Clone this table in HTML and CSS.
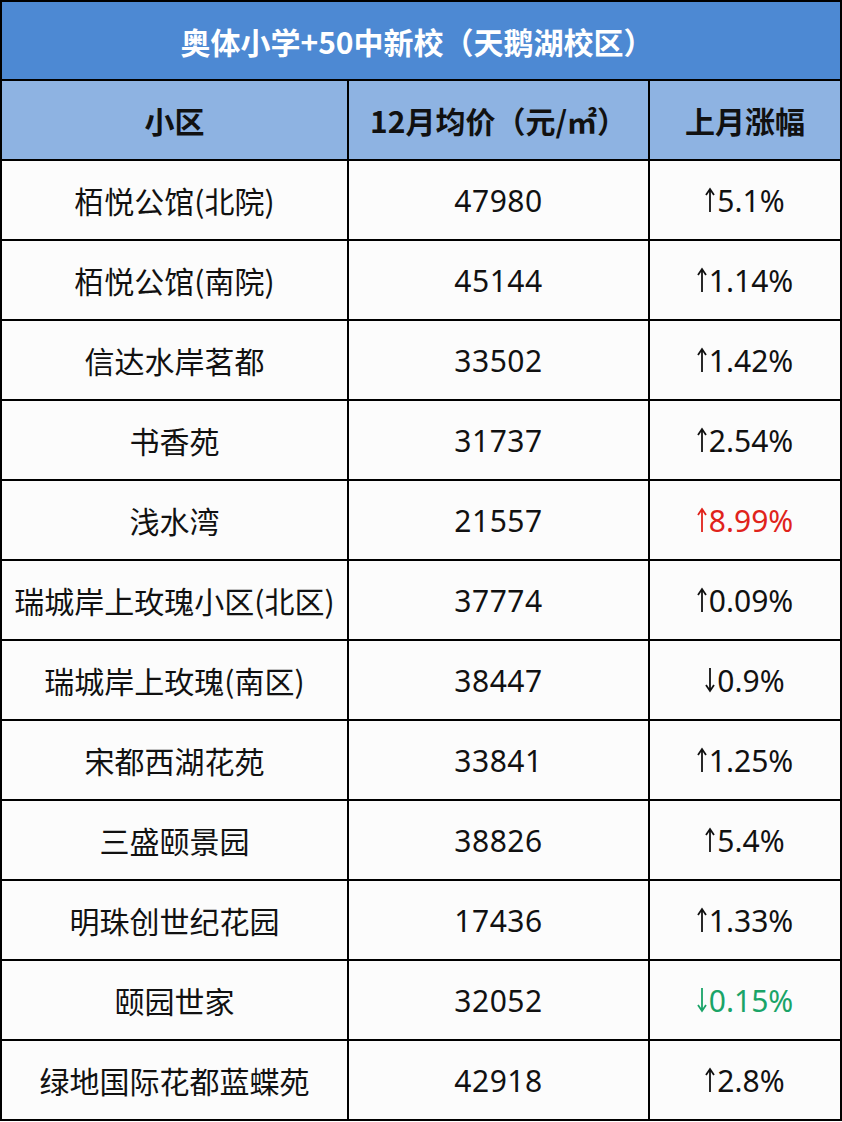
FILE: index.html
```html
<!DOCTYPE html>
<html lang="zh-CN">
<head>
<meta charset="utf-8">
<link rel="stylesheet" href="styles.css">
</head>
<body>
<div class="table">
  <div class="title">奥体小学+50中新校（天鹅湖校区）</div>
  <div class="head">小区</div>
  <div class="head">12月均价（元/㎡）</div>
  <div class="head">上月涨幅</div>

  <div class="cell">栢悦公馆(北院)</div><div class="cell num">47980</div><div class="cell pct"><svg class="arr" viewBox="0 0 10 26"><path d="M5 2V25M1 8L5 2L9 8" /></svg>5.1%</div>
  <div class="cell">栢悦公馆(南院)</div><div class="cell num">45144</div><div class="cell pct"><svg class="arr" viewBox="0 0 10 26"><path d="M5 2V25M1 8L5 2L9 8" /></svg>1.14%</div>
  <div class="cell">信达水岸茗都</div><div class="cell num">33502</div><div class="cell pct"><svg class="arr" viewBox="0 0 10 26"><path d="M5 2V25M1 8L5 2L9 8" /></svg>1.42%</div>
  <div class="cell">书香苑</div><div class="cell num">31737</div><div class="cell pct"><svg class="arr" viewBox="0 0 10 26"><path d="M5 2V25M1 8L5 2L9 8" /></svg>2.54%</div>
  <div class="cell">浅水湾</div><div class="cell num">21557</div><div class="cell pct red"><svg class="arr" viewBox="0 0 10 26"><path d="M5 2V25M1 8L5 2L9 8" /></svg>8.99%</div>
  <div class="cell">瑞城岸上玫瑰小区(北区)</div><div class="cell num">37774</div><div class="cell pct"><svg class="arr" viewBox="0 0 10 26"><path d="M5 2V25M1 8L5 2L9 8" /></svg>0.09%</div>
  <div class="cell">瑞城岸上玫瑰(南区)</div><div class="cell num">38447</div><div class="cell pct"><svg class="arr" viewBox="0 0 10 26"><path d="M5 1V24M1 18L5 24L9 18" /></svg>0.9%</div>
  <div class="cell">宋都西湖花苑</div><div class="cell num">33841</div><div class="cell pct"><svg class="arr" viewBox="0 0 10 26"><path d="M5 2V25M1 8L5 2L9 8" /></svg>1.25%</div>
  <div class="cell">三盛颐景园</div><div class="cell num">38826</div><div class="cell pct"><svg class="arr" viewBox="0 0 10 26"><path d="M5 2V25M1 8L5 2L9 8" /></svg>5.4%</div>
  <div class="cell">明珠创世纪花园</div><div class="cell num">17436</div><div class="cell pct"><svg class="arr" viewBox="0 0 10 26"><path d="M5 2V25M1 8L5 2L9 8" /></svg>1.33%</div>
  <div class="cell">颐园世家</div><div class="cell num">32052</div><div class="cell pct green"><svg class="arr" viewBox="0 0 10 26"><path d="M5 1V24M1 18L5 24L9 18" /></svg>0.15%</div>
  <div class="cell">绿地国际花都蓝蝶苑</div><div class="cell num">42918</div><div class="cell pct"><svg class="arr" viewBox="0 0 10 26"><path d="M5 2V25M1 8L5 2L9 8" /></svg>2.8%</div>
</div>
</body>
</html>
```
FILE: styles.css
```css
html, body {
  margin: 0;
  padding: 0;
  background: #ffffff;
}
.table {
  width: 842px;
  box-sizing: border-box;
  display: grid;
  grid-template-columns: 345px 299px 190px;
  grid-template-rows: 77px repeat(13, 78px);
  gap: 2px;
  padding: 2px;
  background: #000000;
  font-family: "Noto Sans CJK SC", "Noto Sans", sans-serif;
}
.title {
  grid-column: 1 / 4;
  background: #4d89d3;
  color: #ffffff;
  font-weight: 700;
  font-size: 30px;
  display: flex;
  align-items: center;
  justify-content: center;
  padding-right: 8px;
}
.head {
  background: #8eb3e2;
  color: #111111;
  font-weight: 700;
  font-size: 30px;
  display: flex;
  align-items: center;
  justify-content: center;
}
.cell {
  background: #fcfcfc;
  color: #111111;
  font-size: 30px;
  display: flex;
  align-items: center;
  justify-content: center;
}
.num {
  font-family: "Noto Sans", "Noto Sans CJK SC", sans-serif;
  font-size: 30px;
  letter-spacing: 0.5px;
}
.pct {
  font-family: "Noto Sans", "Noto Sans CJK SC", sans-serif;
  font-size: 30px;
}
.arr {
  width: 10px;
  height: 26px;
  margin-right: 2px;
  fill: none;
  stroke: currentColor;
  stroke-width: 1.8;
  stroke-linejoin: miter;
}
.red {
  color: #e0231b;
}
.green {
  color: #1aa468;
}
```
